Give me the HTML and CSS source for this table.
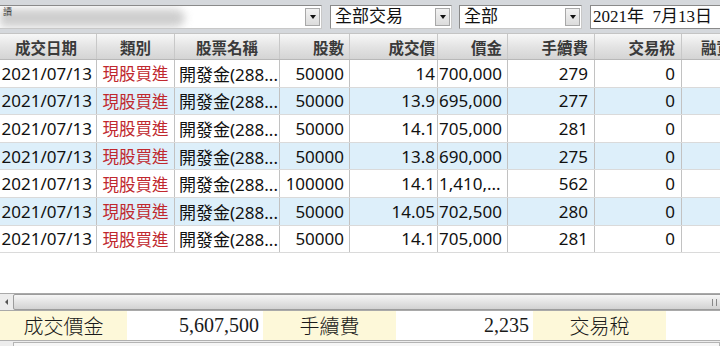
FILE: index.html
```html
<!DOCTYPE html>
<html lang="zh-Hant">
<head>
<meta charset="utf-8">
<link rel="stylesheet" href="styles.css">
</head>
<body>
<div class="app">
  <div class="toolbar">
    <div class="combo combo-account">
      <div class="combo-text"><span class="blur"></span><span class="tiny">讀</span></div>
      <div class="combo-btn"><span class="tri"></span></div>
    </div>
    <div class="combo combo-type">
      <div class="combo-text">全部交易</div>
      <div class="combo-btn"><span class="tri"></span></div>
    </div>
    <div class="combo combo-all">
      <div class="combo-text">全部</div>
      <div class="combo-btn"><span class="tri"></span></div>
    </div>
    <div class="datebox">2021年&nbsp;&nbsp;7月13日</div>
  </div>

  <div class="grid">
    <div class="row head">
      <div class="c c1 center">成交日期</div>
      <div class="c c2 center">類別</div>
      <div class="c c3 center">股票名稱</div>
      <div class="c c4">股數</div>
      <div class="c c5">成交價</div>
      <div class="c c6">價金</div>
      <div class="c c7">手續費</div>
      <div class="c c8">交易稅</div>
      <div class="c c9 last">融資</div>
    </div>
    <div class="row">
      <div class="c c1">2021/07/13</div><div class="c c2 center red">現股買進</div><div class="c c3 left">開發金(288...</div><div class="c c4">50000</div><div class="c c5">14</div><div class="c c6 tight">700,000</div><div class="c c7">279</div><div class="c c8">0</div><div class="c c9"></div>
    </div>
    <div class="row alt">
      <div class="c c1">2021/07/13</div><div class="c c2 center red">現股買進</div><div class="c c3 left">開發金(288...</div><div class="c c4">50000</div><div class="c c5">13.9</div><div class="c c6 tight">695,000</div><div class="c c7">277</div><div class="c c8">0</div><div class="c c9"></div>
    </div>
    <div class="row">
      <div class="c c1">2021/07/13</div><div class="c c2 center red">現股買進</div><div class="c c3 left">開發金(288...</div><div class="c c4">50000</div><div class="c c5">14.1</div><div class="c c6 tight">705,000</div><div class="c c7">281</div><div class="c c8">0</div><div class="c c9"></div>
    </div>
    <div class="row alt">
      <div class="c c1">2021/07/13</div><div class="c c2 center red">現股買進</div><div class="c c3 left">開發金(288...</div><div class="c c4">50000</div><div class="c c5">13.8</div><div class="c c6 tight">690,000</div><div class="c c7">275</div><div class="c c8">0</div><div class="c c9"></div>
    </div>
    <div class="row">
      <div class="c c1">2021/07/13</div><div class="c c2 center red">現股買進</div><div class="c c3 left">開發金(288...</div><div class="c c4">100000</div><div class="c c5">14.1</div><div class="c c6 tight">1,410,...</div><div class="c c7">562</div><div class="c c8">0</div><div class="c c9"></div>
    </div>
    <div class="row alt">
      <div class="c c1">2021/07/13</div><div class="c c2 center red">現股買進</div><div class="c c3 left">開發金(288...</div><div class="c c4">50000</div><div class="c c5">14.05</div><div class="c c6 tight">702,500</div><div class="c c7">280</div><div class="c c8">0</div><div class="c c9"></div>
    </div>
    <div class="row">
      <div class="c c1">2021/07/13</div><div class="c c2 center red">現股買進</div><div class="c c3 left">開發金(288...</div><div class="c c4">50000</div><div class="c c5">14.1</div><div class="c c6 tight">705,000</div><div class="c c7">281</div><div class="c c8">0</div><div class="c c9"></div>
    </div>
  </div>

  <div class="hscroll">
    <div class="sb-arrow"><span class="ltri"></span></div>
    <div class="sb-thumb"><span class="grip"></span></div>
  </div>

  <div class="summary">
    <div class="s-label s1">成交價金</div>
    <div class="s-val s2">5,607,500</div>
    <div class="s-label s3">手續費</div>
    <div class="s-val s4">2,235</div>
    <div class="s-label s5">交易稅</div>
    <div class="s-val s6"></div>
  </div>
  <div class="bottom-strip"><div class="bs-box"></div></div>
</div>
</body>
</html>
```

FILE: styles.css
```css
* { box-sizing: border-box; }
html, body { margin: 0; padding: 0; }
body {
  width: 720px;
  height: 346px;
  overflow: hidden;
  background: #ffffff;
}
.app {
  width: 720px;
  height: 346px;
  display: flex;
  flex-direction: column;
  overflow: hidden;
}

/* toolbar */
.toolbar {
  height: 33px;
  flex: none;
  background: #d5d8dc;
  display: flex;
  align-items: flex-start;
  padding-top: 5px;
  font-family: "Liberation Serif", "Noto Sans CJK TC", serif;
  font-size: 17px;
  color: #111;
}
.combo {
  height: 24px;
  background: #fff;
  border: 1px solid #8a8a8a;
  border-right-color: #c8c8c8;
  border-bottom-color: #c8c8c8;
  display: flex;
  align-items: stretch;
  flex: none;
}
.combo-account { width: 323px; margin-left: -1px; margin-right: 8px; }
.combo-type { width: 122px; margin-right: 7px; }
.combo-all { width: 123px; margin-right: 8px; }
.combo-text {
  flex: 1;
  padding-left: 4px;
  line-height: 22px;
  white-space: nowrap;
  overflow: hidden;
  position: relative;
}
.combo-btn {
  width: 15px;
  margin: 2px 1px 2px 0;
  background: linear-gradient(#f2f2f2, #dcdcdc);
  border: 1px solid #a8a8a8;
  display: flex;
  align-items: center;
  justify-content: center;
}
.tri {
  width: 0; height: 0;
  border-left: 3px solid transparent;
  border-right: 3px solid transparent;
  border-top: 4px solid #111;
}
.blur {
  position: absolute;
  left: 0; top: 3px;
  width: 185px; height: 18px;
  background: #c2c2c2;
  border-radius: 2px 10px 10px 2px;
  filter: blur(4px);
  opacity: 0.8;
}
.tiny {
  position: absolute;
  left: 3px; top: 1px;
  font-size: 9px;
  line-height: 10px;
  color: #444;
}
.datebox {
  flex: 1;
  height: 24px;
  margin-right: -10px;
  background: #fff;
  border: 1px solid #8a8a8a;
  border-right: none;
  padding-left: 2px;
  line-height: 22px;
  white-space: nowrap;
}

/* grid */
.grid {
  flex: none;
  font-family: "Noto Sans", "Noto Sans CJK TC", sans-serif;
  font-size: 17px;
  color: #111;
}
.row {
  display: flex;
  height: 27.6px;
  width: 820px;
  border-bottom: 1px solid #dadada;
  background: #fff;
}
.row.alt { background: #ddeffa; }
.row.head {
  height: 27px;
  background: linear-gradient(#f7f7f7, #e2e2e2 55%, #d4d4d4);
  border-top: 1px solid #c4c4c4;
  border-bottom: 1px solid #b8b8b8;
  font-family: "Noto Sans CJK TC", sans-serif;
  font-weight: 700;
  font-size: 15.5px;
  color: #3a3a3a;
}
.c {
  flex: none;
  border-right: 1px solid #c2c2c2;
  padding: 0 5px;
  display: flex;
  align-items: center;
  justify-content: flex-end;
  white-space: nowrap;
  overflow: hidden;
}
.c.center { justify-content: center; }
.c.left { justify-content: flex-start; padding-left: 4px; }
.c.tight { justify-content: flex-start; padding-left: 1px; }
.c.red { color: #c0282e; font-family: "Noto Sans CJK TC", sans-serif; font-size: 16.5px; }
.c1 { width: 97px; padding-right: 4px; padding-left: 0; }
.c2 { width: 78px; }
.c3 { width: 105px; }
.c4 { width: 70px; }
.c5 { width: 88px; padding-right: 2px; }
.c6 { width: 70px; }
.c7 { width: 87px; padding-right: 6px; }
.c8 { width: 87px; padding-right: 6px; }
.c9 { width: 130px; border-right: none; }
.c9.last { justify-content: flex-start; padding-left: 19px; }
.head .c { border-right-color: #c8c8c8; }

/* scrollbar */
.hscroll {
  margin-top: auto;
  height: 18px;
  flex: none;
  display: flex;
  background: #e9e9e9;
  border-top: 1px solid #a9a9a9;
  border-bottom: 1px solid #a9a9a9;
}
.sb-arrow {
  width: 13px;
  display: flex;
  align-items: center;
  justify-content: center;
  background: #ececec;
}
.ltri {
  width: 0; height: 0;
  border-top: 3px solid transparent;
  border-bottom: 3px solid transparent;
  border-right: 3px solid #555;
}
.sb-thumb {
  flex: 1;
  margin-right: -4px;
  border: 1px solid #9c9c9c;
  border-radius: 2px;
  background: linear-gradient(#f6f6f6, #e4e4e4 50%, #d2d2d2);
  display: flex;
  align-items: center;
  justify-content: flex-end;
  padding-right: 6px;
}
.grip {
  width: 5px;
  height: 7px;
  border-left: 1px solid #888;
  border-right: 1px solid #888;
}

/* summary */
.summary {
  height: 30px;
  flex: none;
  display: flex;
  font-family: "Liberation Serif", "Noto Sans CJK TC", serif;
  font-size: 20px;
  color: #1a1a1a;
  border-bottom: 1px solid #b0b0b0;
}
.s-label {
  background: #fdf8d9;
  display: flex;
  align-items: center;
  justify-content: center;
  font-weight: 300;
}
.s-val {
  background: #fff;
  display: flex;
  align-items: center;
  justify-content: flex-end;
  padding-right: 4px;
}
.s1 { width: 127px; }
.s2 { width: 136px; }
.s3 { width: 133px; }
.s4 { width: 137px; }
.s5 { width: 133px; }
.s6 { flex: 1; }

.bottom-strip {
  flex: none;
  height: 5px;
  background: #ededed;
  padding-left: 13px;
  padding-top: 1px;
}
.bs-box {
  height: 4px;
  border: 1px solid #b4b4b4;
  border-bottom: none;
  background: #f6f6f6;
}
```
